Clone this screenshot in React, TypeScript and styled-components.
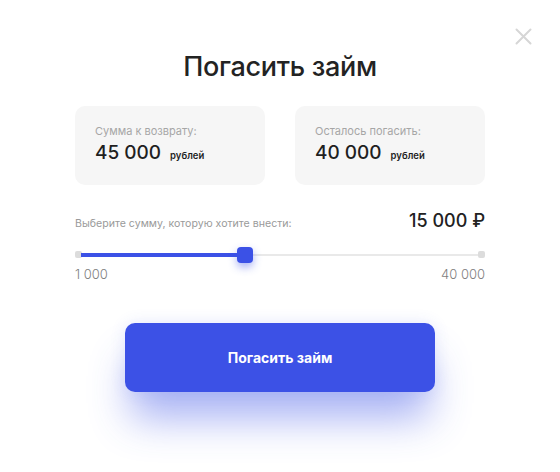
import React from 'react';
import styled, { createGlobalStyle } from 'styled-components';

const Global = createGlobalStyle`
  html, body { margin: 0; padding: 0; background: #fff; }
  body { font-family: Inter, "Noto Sans", sans-serif; -webkit-font-smoothing: antialiased; }
`;

const Modal = styled.div`
  position: relative;
  width: 560px;
  height: 472px;
  box-sizing: border-box;
  padding: 50px 75px 0;
  background: #fff;
  display: flex;
  flex-direction: column;
  overflow: hidden;
`;

const Close = styled.button`
  position: absolute;
  top: 28px;
  left: 515px;
  width: 17px;
  height: 17px;
  padding: 0;
  border: 0;
  background: none;
  cursor: pointer;
  display: flex;
`;

const Title = styled.h1`
  margin: 0;
  font-size: 27px;
  line-height: 33px;
  font-weight: 500;
  color: #232323;
  text-align: center;
  letter-spacing: -0.3px;
`;

const Cards = styled.div`
  margin-top: 23px;
  display: grid;
  grid-template-columns: 190px 190px;
  justify-content: space-between;
`;

const Card = styled.div`
  height: 79px;
  box-sizing: border-box;
  padding: 18px 20px 0;
  background: #f6f6f6;
  border-radius: 10px;
`;

const CardLabel = styled.div`
  font-size: 11px;
  line-height: 14px;
  color: #a6a6a6;
`;

const CardValue = styled.div`
  margin-top: 3px;
  display: flex;
  align-items: baseline;
  gap: 9px;
  color: #1f1f1f;
`;

const Amount = styled.span`
  font-size: 19px;
  line-height: 23px;
  font-weight: 500;
`;

const Unit = styled.span`
  font-size: 9.5px;
  font-weight: 600;
`;

const SliderHead = styled.div`
  margin-top: 25px;
  display: flex;
  justify-content: space-between;
  align-items: baseline;
`;

const SliderLabel = styled.span`
  font-size: 10.6px;
  color: #9a9a9a;
`;

const SliderValue = styled.span`
  font-size: 18px;
  line-height: 22px;
  font-weight: 500;
  color: #222;
`;

const Slider = styled.div`
  position: relative;
  margin-top: 15px;
  height: 16px;
`;

const Track = styled.div`
  position: absolute;
  left: 0;
  right: 0;
  top: 7px;
  height: 2px;
  background: #e9e9e9;
`;

const Stop = styled.div<{ $side: 'left' | 'right' }>`
  position: absolute;
  top: 4px;
  ${(p) => (p.$side === 'left' ? 'left: 0;' : 'right: 0;')}
  width: 7px;
  height: 7px;
  border-radius: 2px;
  background: #dcdcdc;
`;

const Fill = styled.div`
  position: absolute;
  left: 6px;
  top: 6px;
  height: 4px;
  background: #3b51e6;
`;

const Thumb = styled.div`
  position: absolute;
  top: 0;
  width: 16px;
  height: 16px;
  margin-left: -8px;
  border-radius: 4px;
  background: #3b51e6;
  box-shadow: 0 4px 8px rgba(59, 81, 230, 0.45);
`;

const Limits = styled.div`
  margin-top: 3px;
  display: flex;
  justify-content: space-between;
  font-size: 13px;
  line-height: 16px;
  color: #7e7e7e;
  font-weight: 300;
`;

const PayButton = styled.button`
  align-self: center;
  margin-top: 41px;
  width: 310px;
  height: 69px;
  border: 0;
  border-radius: 10px;
  background: #3c51e6;
  color: #fff;
  font-family: Inter, "Noto Sans", sans-serif;
  font-size: 14px;
  font-weight: 700;
  cursor: pointer;
  box-shadow: 0 32px 40px -6px rgba(59, 81, 230, 0.45), 0 0 16px rgba(59, 81, 230, 0.12);
`;

export default function App() {
  const percent = 41.5;
  return (
    <>
      <Global />
      <Modal>
        <Close aria-label="Закрыть">
          <svg width="17" height="17" viewBox="0 0 17 17">
            <path d="M1.5 1.5 L15.5 15.5 M15.5 1.5 L1.5 15.5" stroke="#d6d6d6" strokeWidth="2" strokeLinecap="round" />
          </svg>
        </Close>
        <Title>Погасить займ</Title>
        <Cards>
          <Card>
            <CardLabel>Сумма к возврату:</CardLabel>
            <CardValue>
              <Amount>45 000</Amount>
              <Unit>рублей</Unit>
            </CardValue>
          </Card>
          <Card>
            <CardLabel>Осталось погасить:</CardLabel>
            <CardValue>
              <Amount>40 000</Amount>
              <Unit>рублей</Unit>
            </CardValue>
          </Card>
        </Cards>
        <SliderHead>
          <SliderLabel>Выберите сумму, которую хотите внести:</SliderLabel>
          <SliderValue>15 000 ₽</SliderValue>
        </SliderHead>
        <Slider>
          <Track />
          <Stop $side="left" />
          <Stop $side="right" />
          <Fill style={{ width: `calc(${percent}% - 6px)` }} />
          <Thumb style={{ left: `${percent}%` }} />
        </Slider>
        <Limits>
          <span>1 000</span>
          <span>40 000</span>
        </Limits>
        <PayButton>Погасить займ</PayButton>
      </Modal>
    </>
  );
}
